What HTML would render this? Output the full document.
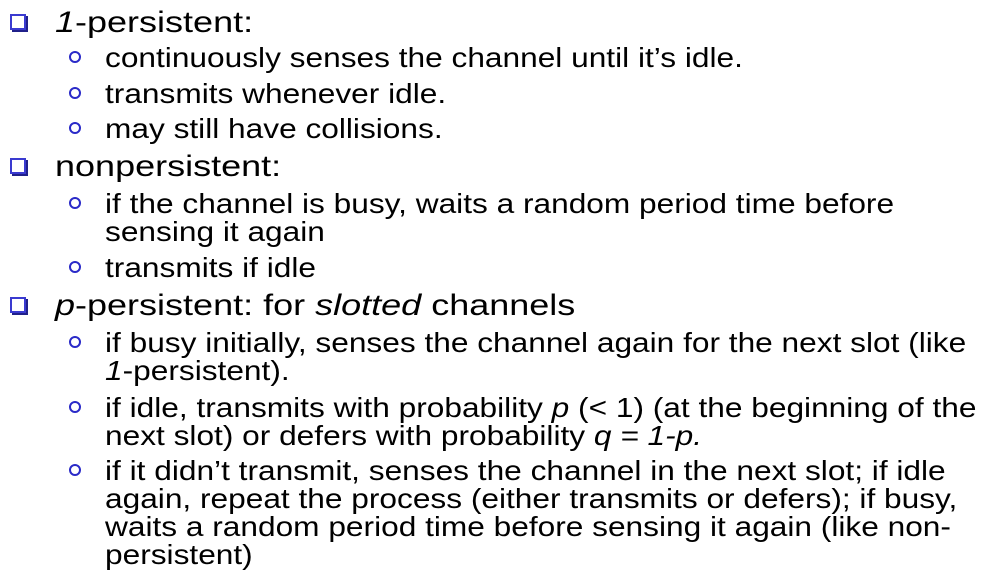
<!DOCTYPE html>
<html><head><meta charset="utf-8"><style>
body{margin:0;width:995px;height:583px;background:#fff;position:relative;overflow:hidden;font-family:"Liberation Sans",sans-serif;color:#000}
.l{position:absolute;white-space:nowrap;line-height:1;transform-origin:0 0}
.a{left:55px;font-size:30px;transform:scaleX(1.2)}
.b{left:105px;font-size:28px;transform:scaleX(1.13)}
.sq{position:absolute;left:10px;width:12px;height:12px;border:2px solid #3a3ad0;box-shadow:2px 2px 0 #20208a}
.ci{position:absolute;left:69px;width:8px;height:8px;border:2px solid #2a2ac8;border-radius:50%}
</style></head><body>
<div class="sq" style="top:14px"></div><div class="l a" style="top:8px"><i>1</i>-persistent:</div>
<div class="ci" style="top:51px"></div><div class="l b" style="top:44px">continuously senses the channel until it’s idle.</div>
<div class="ci" style="top:87px"></div><div class="l b" style="top:80px">transmits whenever idle.</div>
<div class="ci" style="top:122px"></div><div class="l b" style="top:115px">may still have collisions.</div>
<div class="sq" style="top:158px"></div><div class="l a" style="top:152px">nonpersistent:</div>
<div class="ci" style="top:197px"></div><div class="l b" style="top:190px">if the channel is busy, waits a random period time before</div>
<div class="l b" style="top:218px">sensing it again</div>
<div class="ci" style="top:261px"></div><div class="l b" style="top:254px">transmits if idle</div>
<div class="sq" style="top:297px"></div><div class="l a" style="top:291px"><i>p</i>-persistent: for <i>slotted</i> channels</div>
<div class="ci" style="top:336px"></div><div class="l b" style="top:329px">if busy initially, senses the channel again for the next slot (like</div>
<div class="l b" style="top:357px"><i>1</i>-persistent).</div>
<div class="ci" style="top:401px"></div><div class="l b" style="top:394px">if idle, transmits with probability <i>p</i> (&lt; 1) (at the beginning of the</div>
<div class="l b" style="top:422px">next slot) or defers with probability <i>q = 1-p.</i></div>
<div class="ci" style="top:464px"></div><div class="l b" style="top:457px">if it didn’t transmit, senses the channel in the next slot; if idle</div>
<div class="l b" style="top:485px">again, repeat the process (either transmits or defers); if busy,</div>
<div class="l b" style="top:513px">waits a random period time before sensing it again (like non-</div>
<div class="l b" style="top:541px">persistent)</div>
</body></html>
